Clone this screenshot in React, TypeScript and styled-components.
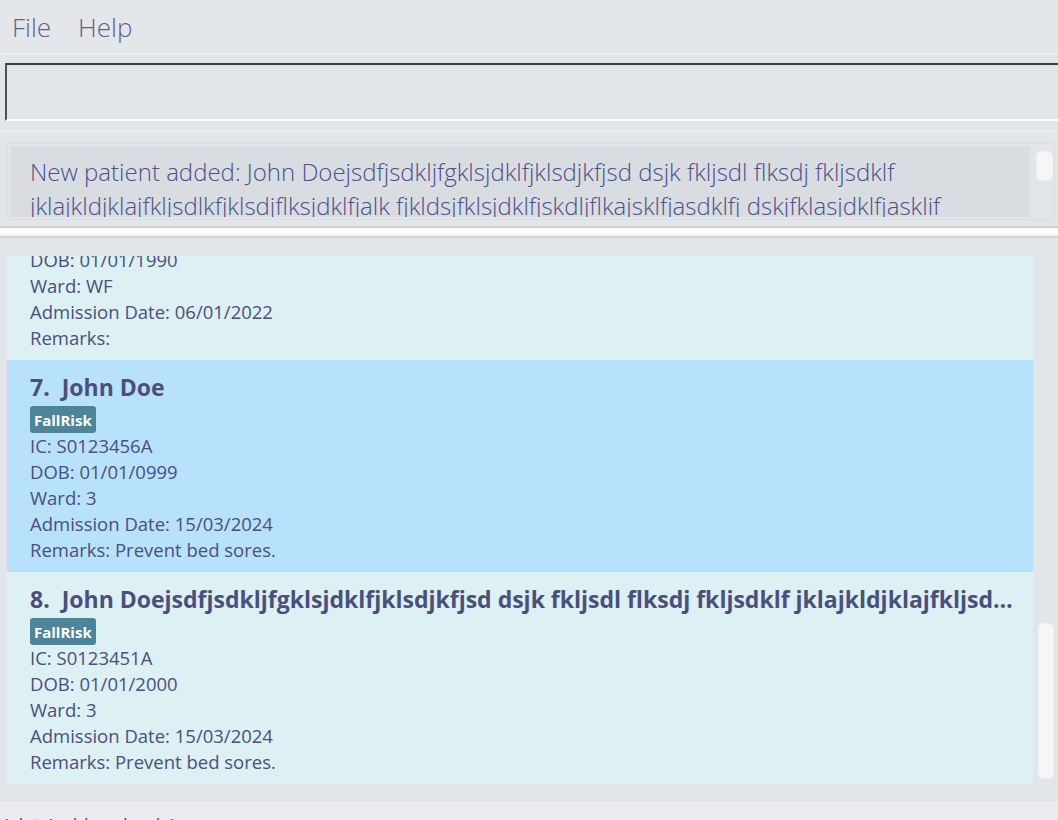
import React from "react";
import styled, { createGlobalStyle } from "styled-components";

const GlobalStyle = createGlobalStyle`
  html, body {
    margin: 0;
    padding: 0;
    background: #e3e6e9;
    overflow: hidden;
  }
  * { box-sizing: border-box; }
`;

const FONT = `"Open Sans", "Noto Sans", "Liberation Sans", sans-serif`;

const Window = styled.div`
  width: 1058px;
  height: 820px;
  display: flex;
  flex-direction: column;
  background: #e3e6e9;
  font-family: ${FONT};
  overflow: hidden;
`;

const MenuBar = styled.div`
  height: 55px;
  flex: none;
  display: flex;
  align-items: center;
  gap: 27px;
  padding: 0 0 0 12px;
  background: #e4e7ea;
  border-bottom: 2px solid #eaedf0;
`;

const MenuItem = styled.span`
  font-size: 26px;
  font-weight: 300;
  color: #5d618e;
`;

const CommandSection = styled.div`
  flex: none;
  height: 77px;
  padding: 8px 0 0 5px;
  border-bottom: 2px solid #eaecef;
`;

const CommandBox = styled.div`
  height: 58px;
  background: #e3e6e9;
  border-top: 2px solid #3b3c3e;
  border-left: 2px solid #505256;
  border-bottom: 2px solid #ffffff;
`;

const ResultSection = styled.div`
  flex: none;
  height: 94px;
  padding: 11px 3px 0 7px;
`;

const ResultFrame = styled.div`
  height: 77px;
  display: flex;
  border: 1px solid #dcdfe2;
  padding: 2px 0 2px 3px;
`;

const ResultText = styled.div`
  width: 1019px;
  height: 71px;
  flex: none;
  overflow: hidden;
  background: #d9dce0;
  padding: 9px 19px 0;
  font-size: 24px;
  font-weight: 300;
  line-height: 34px;
  color: #4b5189;
`;

const ScrollColumn = styled.div<{ $offset: number; $height: number; $left: number; $width: number }>`
  flex: none;
  width: ${(p) => p.$left + p.$width + 6}px;
  padding-left: ${(p) => p.$left}px;
  padding-top: ${(p) => p.$offset}px;
  &::before {
    content: "";
    display: block;
    width: ${(p) => p.$width}px;
    height: ${(p) => p.$height}px;
    border-radius: 5px;
    background: #f6f6f8;
    border: 1px solid #eceef1;
  }
`;

const Divider = styled.div`
  flex: none;
  height: 12px;
  border-top: 2px solid #cdd0d3;
  border-bottom: 2px solid #d3d5d8;
  background: linear-gradient(#f4f5f6, #ffffff 40%, #f1f2f3);
`;

const ListPane = styled.div`
  flex: 1;
  min-height: 0;
  display: flex;
  padding: 18px 0 16px 7px;
  background: #e3e6e9;
`;

const Viewport = styled.div`
  flex: 1;
  min-width: 0;
  display: flex;
  flex-direction: column;
  justify-content: flex-end;
  overflow: hidden;
`;

const Card = styled.div<{ $selected?: boolean }>`
  flex: none;
  padding: 12px 20px 9px 23px;
  background: ${(p) => (p.$selected ? "#b8e1fb" : "#ddf0f3")};
  color: #4a4f7e;
`;

const Title = styled.div`
  font-size: 23px;
  font-weight: 700;
  line-height: 30px;
  white-space: pre;
  overflow: hidden;
  text-overflow: ellipsis;
`;

const Tags = styled.div`
  display: flex;
  gap: 6px;
  margin-top: 4px;
`;

const Tag = styled.span`
  height: 27px;
  display: inline-flex;
  align-items: center;
  padding: 0 4px;
  border-radius: 3px;
  background: #4d8598;
  color: #ffffff;
  font-size: 15px;
  font-weight: 700;
`;

const Field = styled.div`
  font-size: 18.5px;
  line-height: 26px;
  white-space: nowrap;
`;

const StatusBar = styled.div`
  flex: none;
  height: 20px;
  overflow: hidden;
  background: #eaebef;
  border-top: 1px solid #dfe1e4;
  padding: 12px 0 0 1px;
  font-size: 18px;
  line-height: 24px;
  color: #4d4f75;
`;

type Patient = {
  index: number;
  name: string;
  tags: string[];
  ic: string;
  dob: string;
  ward: string;
  admission: string;
  remarks: string;
  selected?: boolean;
};

const longName =
  "John Doejsdfjsdkljfgklsjdklfjklsdjkfjsd dsjk fkljsdl flksdj fkljsdklf jklajkldjklajfkljsdlkfjklsdjflksjdklfjalk fjkldsjfklsjdklfjskdljflkajsklfjasdklfj dskjfklasjdklfjasklif";

const patients: Patient[] = [
  {
    index: 6,
    name: "Alex Yeoh",
    tags: ["Diabetic"],
    ic: "S1234567B",
    dob: "01/01/1990",
    ward: "WF",
    admission: "06/01/2022",
    remarks: "",
  },
  {
    index: 7,
    name: "John Doe",
    tags: ["FallRisk"],
    ic: "S0123456A",
    dob: "01/01/0999",
    ward: "3",
    admission: "15/03/2024",
    remarks: "Prevent bed sores.",
    selected: true,
  },
  {
    index: 8,
    name: longName,
    tags: ["FallRisk"],
    ic: "S0123451A",
    dob: "01/01/2000",
    ward: "3",
    admission: "15/03/2024",
    remarks: "Prevent bed sores.",
  },
];

const PatientCard: React.FC<{ p: Patient }> = ({ p }) => (
  <Card $selected={p.selected}>
    <Title>{`${p.index}.  ${p.name}`}</Title>
    <Tags>
      {p.tags.map((t) => (
        <Tag key={t}>{t}</Tag>
      ))}
    </Tags>
    <Field>IC: {p.ic}</Field>
    <Field>DOB: {p.dob}</Field>
    <Field>Ward: {p.ward}</Field>
    <Field>Admission Date: {p.admission}</Field>
    <Field>Remarks: {p.remarks}</Field>
  </Card>
);

export default function App() {
  return (
    <>
      <GlobalStyle />
      <Window>
        <MenuBar>
          <MenuItem>File</MenuItem>
          <MenuItem>Help</MenuItem>
        </MenuBar>
        <CommandSection>
          <CommandBox />
        </CommandSection>
        <ResultSection>
          <ResultFrame>
            <ResultText>New patient added: {longName}</ResultText>
            <ScrollColumn $offset={5} $height={28} $left={6} $width={15} />
          </ResultFrame>
        </ResultSection>
        <Divider />
        <ListPane>
          <Viewport>
            {patients.map((p) => (
              <PatientCard key={p.index} p={p} />
            ))}
          </Viewport>
          <ScrollColumn $offset={367} $height={154} $left={5} $width={14} />
        </ListPane>
        <StatusBar>.\data\addressbook.json</StatusBar>
      </Window>
    </>
  );
}
